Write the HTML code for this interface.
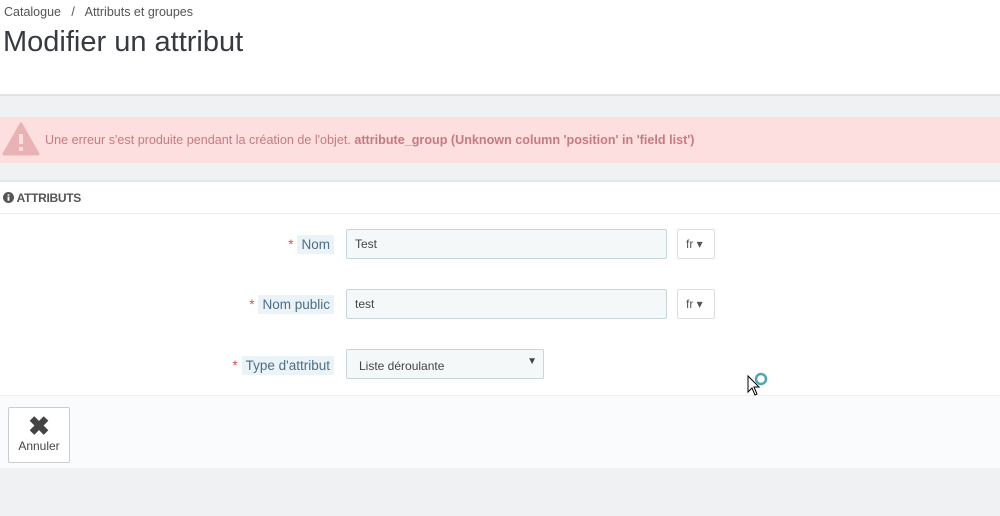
<!DOCTYPE html>
<html><head><meta charset="utf-8"><style>
*{box-sizing:border-box;margin:0;padding:0}
body{width:1000px;height:516px;overflow:hidden;background:#eff1f2;font-family:"Liberation Sans",sans-serif;color:#555;position:relative}
.hdr{position:absolute;left:0;top:0;width:1000px;height:96px;background:#fff;border-bottom:2px solid #dfe2e4}
.bc{position:absolute;left:4px;top:5px;font-size:12.5px;color:#555}
h1{position:absolute;left:3px;top:26px;font-size:29px;font-weight:normal;color:#363a41}
.alert{position:absolute;left:0;top:117px;width:1000px;height:46px;background:#fddfe0;color:#c87a7e;font-size:12.6px}
.alert .t{position:absolute;left:45px;top:16px}
.alert svg{position:absolute;left:2px;top:5px}
.panel{position:absolute;left:0;top:180px;width:1000px;height:288px;background:#fff;border-top:2px solid #e3e6e8;border-bottom:2px solid #dcdfe1}
.ph{height:32px;border-bottom:1px solid #eee;font-size:12px;font-weight:bold;color:#555;padding:9px 0 0 3px;letter-spacing:-0.3px}
.lab{position:absolute;font-size:13.5px;color:#4f6d84}
.lab b{color:#d9534f;font-weight:normal;margin-right:4px}
.lab span{background:#eaf4f8;padding:2px 4px 2px 4px}
.in{position:absolute;left:346px;width:321px;height:30px;background:#f5f8f9;border:1px solid #c7d6db;border-radius:2px;font-size:12px;color:#444;padding:7px 8px}
.fr{position:absolute;left:677px;width:38px;height:30px;background:#fff;border:1px solid #ddd;border-radius:2px;font-size:12px;padding:7px 8px;color:#555}
.foot{position:absolute;left:0;top:213px;width:1000px;height:73px;background:#fafbfc;border-top:1px solid #eee}
.btn{position:absolute;left:8px;top:11px;width:62px;height:56px;background:#fff;border:1px solid #ccc;border-radius:2px;font-size:12px;color:#444;text-align:center}
</style></head><body>
<div class="hdr"><div class="bc">Catalogue &nbsp; / &nbsp; Attributs et groupes</div><h1>Modifier un attribut</h1></div>
<div class="alert"><svg width="38" height="34" viewBox="0 0 38 34"><path d="M19 2 L36 32 L2 32 Z" fill="#e9b3b6" stroke="#e9b3b6" stroke-width="3" stroke-linejoin="round"/><rect x="17" y="12" width="4" height="10" fill="#fddfe0"/><rect x="17" y="25" width="4" height="4" fill="#fddfe0"/></svg><div class="t">Une erreur s'est produite pendant la création de l'objet. <b>attribute_group (Unknown column 'position' in 'field list')</b></div></div>
<div class="panel">
<div class="ph"><svg width="11" height="11" viewBox="0 0 12 12" style="vertical-align:-1px"><circle cx="6" cy="6" r="6" fill="#555"/><rect x="5" y="5" width="2" height="4.5" fill="#fff"/><rect x="5" y="2.5" width="2" height="1.6" fill="#fff"/></svg> ATTRIBUTS</div>
<div class="lab" style="right:666px;top:55px"><b>*</b><span>Nom</span></div>
<div class="in" style="top:47px">Test</div><div class="fr" style="top:47px">fr ▾</div>
<div class="lab" style="right:666px;top:115px"><b>*</b><span>Nom public</span></div>
<div class="in" style="top:107px">test</div><div class="fr" style="top:107px">fr ▾</div>
<div class="lab" style="right:666px;top:176px"><b>*</b><span>Type d'attribut</span></div>
<div class="in" style="top:167px;width:198px;padding-left:12px;padding-top:9px">Liste déroulante<span style="position:absolute;right:6px;top:6px;font-size:10px">▼</span></div>
<div class="foot"><div class="btn"><div style="font-size:26px;font-weight:bold;line-height:26px;margin-top:5px;color:#444">✖</div>Annuler</div></div>
</div>
<svg style="position:absolute;left:746px;top:370px" width="26" height="28" viewBox="0 0 26 28"><path d="M2 6 L2 22 L6 18 L9 25 L11 24 L8 17 L13 17 Z" fill="#fff" stroke="#000"/><circle cx="15" cy="9" r="5" fill="none" stroke="#4aa8b5" stroke-width="2.5"/></svg>
</body></html>
